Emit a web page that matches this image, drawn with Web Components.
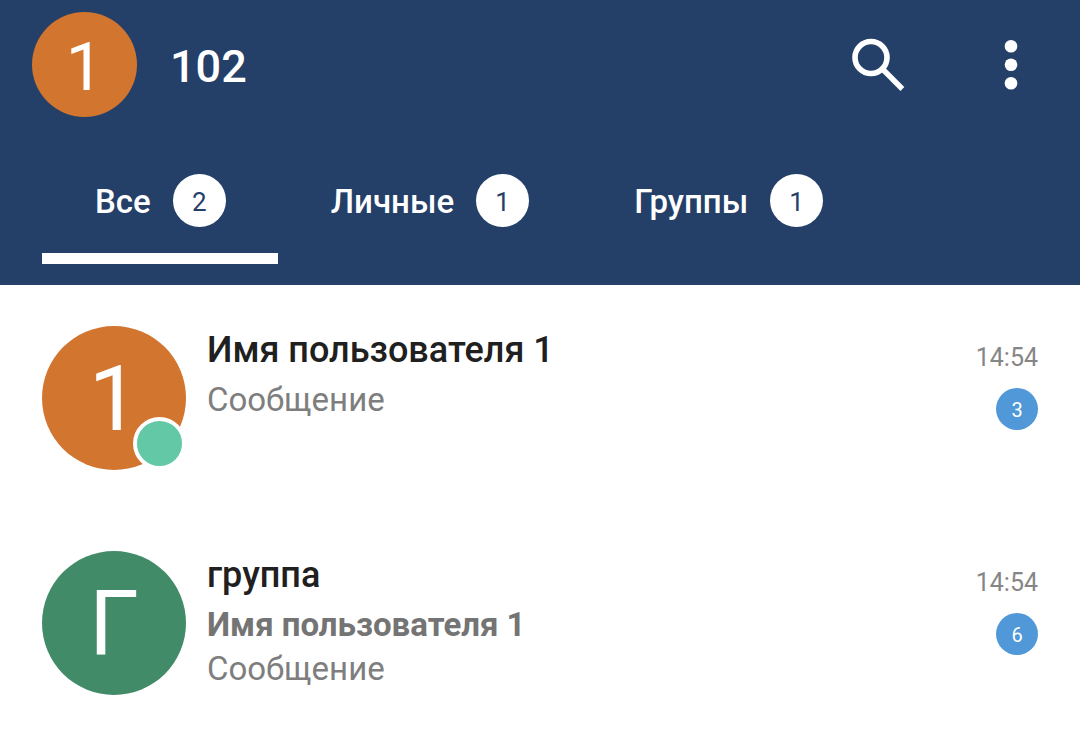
<!DOCTYPE html>
<html lang="ru">
<head>
<meta charset="utf-8">
<meta name="viewport" content="width=device-width, initial-scale=1">
<title>102</title>
<style>
body { margin: 0; background: #fff; font-family: Roboto, sans-serif; }
</style>
</head>
<body>
<chat-app></chat-app>
<script>
const define = (name, html, setup) => customElements.define(name, class extends HTMLElement {
  constructor() {
    super();
    const t = document.createElement('template');
    t.innerHTML = html;
    this.attachShadow({ mode: 'open' }).append(t.content.cloneNode(true));
  }
  connectedCallback() { if (setup) setup(this, this.shadowRoot); }
});

define('user-avatar', `
<style>
:host { display: flex; position: relative; box-sizing: border-box; flex: none; align-items: center; justify-content: center;
  width: 144px; height: 144px; padding-top: 4px; border-radius: 50%; background: var(--avatar, #d2752f); color: #fff;
  font-size: 90px; line-height: 104px; }
:host([small]) { width: 105px; height: 105px; font-size: 67px; line-height: 80px; }
.dot { display: none; position: absolute; right: 0; bottom: 0; width: 45px; height: 45px;
  border: 4px solid #fff; border-radius: 50%; background: #62c8a5; }
:host([online]) .dot { display: block; }
</style>
<span><slot></slot></span><i class="dot"></i>`);

define('count-badge', `
<style>
:host { display: flex; box-sizing: border-box; flex: none; align-items: center; justify-content: center;
  width: 42px; height: 42px; padding-top: 2px; border-radius: 50%; background: #5098d8; color: #fff;
  font-size: 20px; line-height: 24px; font-weight: 400; }
:host([light]) { width: 53px; height: 53px; padding-top: 4px; background: #fff; color: #244068; font-size: 26px; line-height: 32px; }
</style>
<slot></slot>`);

define('app-bar', `
<style>
:host { display: flex; align-items: center; height: 105px; padding: 0 32px; color: #fff; }
h1 { flex: 1; margin: 0; padding: 4px 0 0 33px; font-size: 45px; line-height: 56px; font-weight: 500; }
button { display: flex; align-items: center; justify-content: center; width: 72px; height: 72px; padding: 0;
  border: 0; background: none; color: inherit; }
.menu { width: 56px; margin-left: 69px; margin-right: 9px; }
svg { display: block; fill: currentColor; }
.search svg { fill: none; stroke: currentColor; }
</style>
<user-avatar small>1</user-avatar>
<h1>102</h1>
<button class="search" type="button" aria-label="Поиск"><svg width="54" height="54" viewBox="0 0 54 54"><circle cx="20" cy="19.5" r="16" stroke-width="5.6"/><path d="M31 30.5 51.4 51" stroke-width="5.4"/></svg></button>
<button class="menu" type="button" aria-label="Меню"><svg width="14" height="50" viewBox="0 0 14 50"><circle cx="7" cy="6.3" r="6.3"/><circle cx="7" cy="24.8" r="6.3"/><circle cx="7" cy="43.3" r="6.3"/></svg></button>`);

define('filter-tab', `
<style>
:host { display: block; }
button { display: flex; box-sizing: border-box; align-items: center; gap: 22px; height: 117px; padding: 0 52px 0 53px;
  border: solid transparent; border-width: 0 0 11px; background: none; color: #fff;
  font: 500 33px/40px Roboto, sans-serif; }
.label { padding-top: 4px; }
:host([active]) button { border-bottom-color: #fff; }
</style>
<button type="button" role="tab"><span class="label"><slot></slot></span><count-badge light></count-badge></button>`,
(el, root) => {
  root.querySelector('count-badge').textContent = el.getAttribute('count');
  root.querySelector('button').setAttribute('aria-selected', el.hasAttribute('active'));
});

define('chat-row', `
<style>
:host { display: flex; align-items: flex-start; gap: 21px; }
.text { flex: 1; min-width: 0; }
h2 { margin: 0; font-size: 36px; line-height: 48px; font-weight: 500; color: #202020; }
p { margin: 0; font-size: 33px; line-height: 44px; color: #7e7e7e; }
.author { font-weight: 700; color: #747474; }
.body { padding-top: 4px; }
.meta { display: flex; flex-direction: column; align-items: flex-end; gap: 14px; padding-top: 16px; }
time { font-size: 25px; line-height: 32px; color: #868686; }
</style>
<user-avatar><slot name="initial"></slot></user-avatar>
<div class="text"><h2><slot name="title"></slot></h2><div class="body"><p class="author" hidden></p><p><slot></slot></p></div></div>
<div class="meta"><time></time><count-badge></count-badge></div>`,
(el, root) => {
  root.querySelector('time').textContent = el.getAttribute('time');
  root.querySelector('count-badge').textContent = el.getAttribute('count');
  root.querySelector('user-avatar').toggleAttribute('online', el.hasAttribute('online'));
  const author = root.querySelector('.author');
  author.hidden = !el.hasAttribute('author');
  author.textContent = el.getAttribute('author') || '';
});

define('chat-app', `
<style>
:host { display: block; }
header { padding: 12px 0 21px; background: #244068; }
nav { display: flex; padding: 30px 42px 0; }
main { display: flex; flex-direction: column; gap: 81px; padding: 41px 42px; }
.green { --avatar: #428b68; }
</style>
<header>
<app-bar></app-bar>
<nav role="tablist"><filter-tab active count="2">Все</filter-tab><filter-tab count="1">Личные</filter-tab><filter-tab count="1">Группы</filter-tab></nav>
</header>
<main>
<chat-row time="14:54" count="3" online><span slot="initial">1</span><span slot="title">Имя пользователя 1</span>Сообщение</chat-row>
<chat-row class="green" time="14:54" count="6" author="Имя пользователя 1"><span slot="initial">Г</span><span slot="title">группа</span>Сообщение</chat-row>
</main>`);
</script>
</body>
</html>
